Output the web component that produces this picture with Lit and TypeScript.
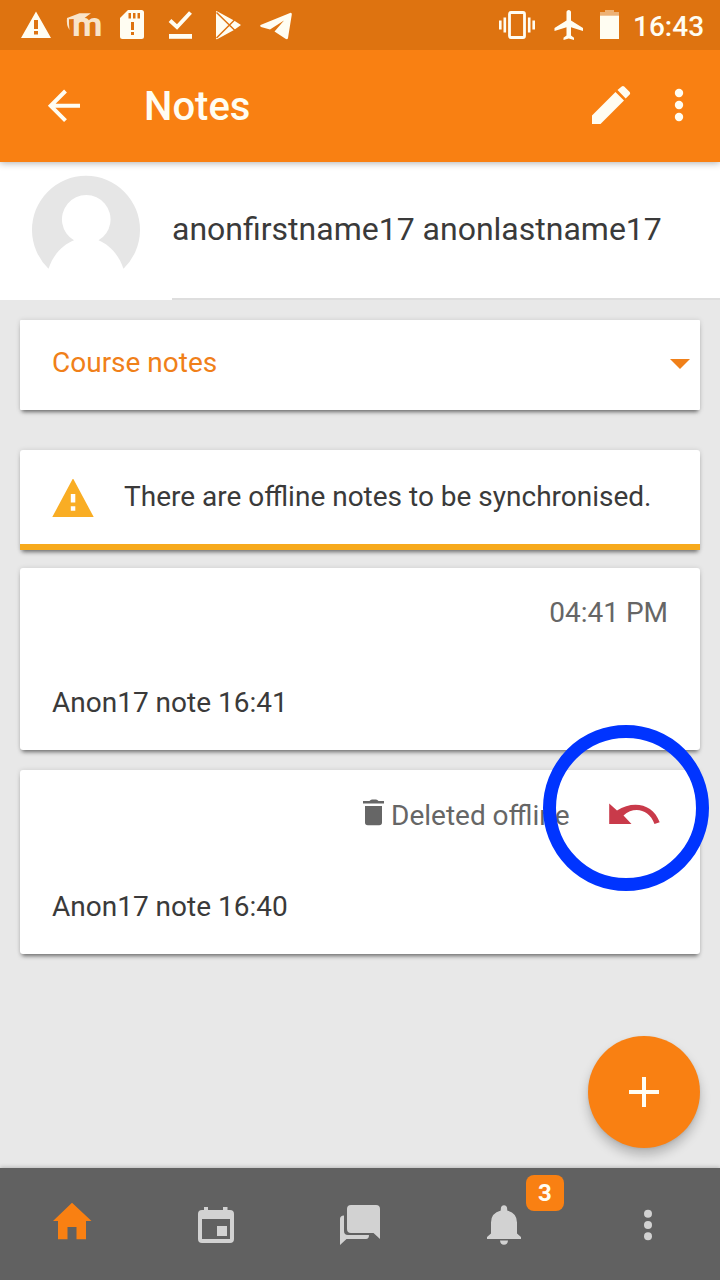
import { LitElement, html, svg, css } from "lit";
import { customElement } from "lit/decorators.js";

// Inline icon; the viewBox keeps one unit equal to one CSS pixel.
const icon = (x: number, y: number, w: number, h: number, body: unknown) =>
  html`<svg width=${w} height=${h} viewBox="${x} ${y} ${w} ${h}" aria-hidden="true">${body}</svg>`;

@customElement("status-bar")
class StatusBar extends LitElement {
  static styles = css`
    :host { display: flex; height: 50px; background: #de7310; color: #fffdf2; position: relative; z-index: 2; }
    svg { display: block; flex: none; }
    .right { margin-left: auto; display: flex; }
    .time { width: 77px; margin-left: 9px; padding-right: 10px; font: 500 28px/54px Roboto, sans-serif; height: 50px; white-space: nowrap; }
    .logo { font: 700 34px Roboto, sans-serif; }
  `;
  render() {
    return html`
      ${icon(0, 0, 60, 50, svg`<path fill="currentColor" fill-rule="evenodd" d="M36 11.5 51 38H21zM34 20v9h4v-9zM34 31v3.5h4V31z"/>`)}
      ${icon(60, 0, 50, 50, svg`<g opacity=".82" fill="currentColor"><text class="logo" x="72" y="36.300" textLength="30.500" lengthAdjust="spacingAndGlyphs">m</text><path d="M67 18 79.500 13.200H91L86.500 16.500 81.500 20.500 74 21.500V19L69 19.300V24L69.500 30Q66 25 67 18z"/></g>`)}
      ${icon(110, 0, 50, 50, svg`<path fill="currentColor" fill-rule="evenodd" d="M128 10h13.500q2.500 0 2.500 2.500v24q0 2.500-2.500 2.500h-19q-2.500 0-2.500-2.500V18zM128.500 13v5.500h2.500V13zM133 13v5.500h2.500V13zM137.500 13v5.500h2.500V13zM131 22v8h3v-8zM131 32v3h3v-3z"/>`)}
      ${icon(160, 0, 45, 50, svg`<path d="m170 20.500 7 6.500 13.500-14.500" fill="none" stroke="currentColor" stroke-width="4"/><path fill="currentColor" d="M169 34h23v4.800h-23z"/>`)}
      ${icon(205, 0, 45, 50, svg`<path fill="currentColor" d="M216 11.500q0-1 1.500 0L234 20.500l7 4.500-7 5-16.500 9q-1.500.8-1.500-.500z"/><path d="m216.500 12.500 19 18.500M216.500 38 235.500 19" stroke="#de7310" stroke-width="1.500"/>`)}
      ${icon(250, 0, 50, 50, svg`<path fill="currentColor" d="M260.500 25 290 13q2-.6 1.800 1.500L288 38q-.500 2-2.500.8L274.500 31.500 284 20.500 270 29.500 261 27q-1.500-1-.500-2z"/>`)}
      <div class="right">
        ${icon(490, 0, 134, 50, svg`<rect x="509.500" y="12.500" width="15" height="25" rx="1.500" fill="none" stroke="currentColor" stroke-width="2.800"/><path d="M504.800 17.500v15M500.300 20.500v9M529.200 17.500v15M533.700 20.500v9" stroke="currentColor" stroke-width="2.600"/>
        <path transform="translate(551.500 7) scale(1.500)" fill="currentColor" d="M21 16v-2l-8-5V3.500c0-.83-.67-1.500-1.500-1.500S10 2.670 10 3.500V9l-8 5v2l8-2.500V19l-2 1.500V22l3.500-1 3.500 1v-1.500L13 19v-5.500z"/>
        <path opacity=".45" fill="currentColor" d="M605 10h9v2h5v3.500h-19V12h5z"/><path fill="currentColor" d="M600 15.500h19V39h-19z"/>`)}
        <span class="time">16:43</span>
      </div>`;
  }
}

@customElement("tab-bar")
class TabBar extends LitElement {
  static styles = css`
    :host { display: grid; grid-template-columns: repeat(5, 1fr); height: 112px; background: #616161; color: #d2d2d2; box-shadow: 0 -1px 4px rgba(0,0,0,.2); position: relative; }
    .tab { position: relative; }
    .home { color: #f98012; }
    svg { display: block; }
    .badge { position: absolute; left: 94px; top: 7px; width: 38px; height: 36px; border-radius: 8px; background: #f98012; color: #fffdf2; text-align: center; font: 700 24px/37px Roboto, sans-serif; }
  `;
  render() {
    return html`
      <div class="tab home">${icon(0, 1168, 144, 112, svg`<path fill="currentColor" d="M72 1202.700 91.500 1221H86v18.300h-9.500V1227h-9v12.300H58V1221h-5z"/>`)}</div>
      <div class="tab">${icon(144, 1168, 144, 112, svg`<path fill="currentColor" fill-rule="evenodd" d="M204 1207h4v3h15v-3h4.500v3h2.500q4 0 4 4v25q0 4-4 4h-28q-4 0-4-4v-25q0-4 4-4h2zM202 1219v20h28v-20zM217 1226h10v10h-10z"/>`)}</div>
      <div class="tab">${icon(288, 1168, 144, 112, svg`<path fill="currentColor" d="M351 1205h25q4 0 4 4v30l-6.500-6H351q-4 0-4-4v-20q0-4 4-4zM344 1215.500V1231q0 4 4 4h21q0 4-3 4h-19.500l-6.500 6v-26q0-3.500 4-3.500z"/>`)}</div>
      <div class="tab">${icon(432, 1168, 144, 112, svg`<path fill="currentColor" d="M504 1205.300q3 0 3.200 3.700v1.500q9.800 2.500 9.800 12v11l4 3.500v2h-34v-2l4-3.500v-11q0-9.500 9.800-12v-1.500q.2-3.700 3.200-3.700zM500 1240.500h8q-.500 4.300-4 4.300t-4-4.300z"/>`)}<span class="badge">3</span></div>
      <div class="tab">${icon(576, 1168, 144, 112, svg`<g fill="currentColor"><circle cx="648" cy="1213.700" r="4"/><circle cx="648" cy="1225" r="4"/><circle cx="648" cy="1236.300" r="4"/></g>`)}</div>`;
  }
}

@customElement("app-root")
class AppRoot extends LitElement {
  static styles = css`
    :host { display: flex; flex-direction: column; width: 720px; height: 1280px; background: #e8e8e8; position: relative; overflow: hidden; font-family: Roboto, sans-serif; color: #3a3a3a; }
    svg { display: block; flex: none; }
    status-bar, tab-bar { flex: none; }
    .header { display: flex; height: 112px; flex: none; background: #f98012; color: #fffdf2; box-shadow: 0 1px 7px rgba(0,0,0,.32); position: relative; z-index: 1; }
    h1 { margin: 0; flex: 1; font: 500 40px/114px Roboto, sans-serif; height: 112px; }
    .user { display: flex; height: 138px; flex: none; background: linear-gradient(#fff, #fff) 0 0 / 172px 138px no-repeat; }
    .name { flex: 1; height: 136px; background: #fff; border-bottom: 2px solid #dedede; font-size: 32px; line-height: 134px; }
    .content { flex: 1; display: flex; flex-direction: column; padding: 20px 20px 0; }
    .card { background: #fff; border-radius: 3px; box-shadow: 0 4px 4px -2px rgba(0,0,0,.5), 0 0 5px rgba(0,0,0,.12); font-size: 28px; line-height: 36px; flex: none; display: flex; box-sizing: border-box; }
    .select { height: 90px; margin-bottom: 40px; padding: 25px 0 0 32px; color: #f08019; justify-content: space-between; border-radius: 1px; }
    .warning { height: 100px; margin-bottom: 18px; border-bottom: 6px solid #f7aa1d; border-radius: 3px 3px 0 0; padding-top: 29px; }
    .note { flex-direction: column; padding: 27px 32px 0; }
    .first { height: 182px; margin-bottom: 20px; }
    .second { height: 184px; }
    .meta { align-self: flex-end; color: #666; display: flex; height: 90px; }
    .second .meta { height: 92px; padding-right: 8px; }
    .state { padding-top: 1px; width: 178px; white-space: nowrap; }
    .fab { position: absolute; left: 588px; top: 1036px; width: 112px; height: 112px; border-radius: 50%; background: #f98012; box-shadow: 0 7px 11px rgba(0,0,0,.22), 0 1px 3px rgba(0,0,0,.08); color: #fffdf2; }
    .ring { position: absolute; left: 543px; top: 725px; width: 166px; height: 166px; box-sizing: border-box; border: 13px solid #0034ff; border-radius: 50%; }
  `;
  render() {
    return html`
      <status-bar></status-bar>
      <header class="header">
        ${icon(0, 50, 144, 112, svg`<path d="M80 105.800H51M65.500 91 50.700 105.800 65.500 120.600" fill="none" stroke="currentColor" stroke-width="4"/>`)}
        <h1>Notes</h1>
        ${icon(576, 50, 144, 112, svg`<path fill="currentColor" d="M592 124v-8.500l23.500-23.500 8.500 8.500L600.500 124zM617.500 90l4.200-3.500q1.200-1 2.500 0l5.500 5.500q1 1.300 0 2.500l-4 4z"/><g fill="currentColor"><circle cx="679" cy="93" r="4.200"/><circle cx="679" cy="105" r="4.200"/><circle cx="679" cy="117" r="4.200"/></g>`)}
      </header>
      <section class="user">
        ${icon(0, 162, 172, 136, svg`<path fill="#e6e6e6" d="M48.500 268.700A54 54 0 1 1 123.500 268.700C118 253 109 245 98.500 240.300A24.300 24.300 0 1 0 74 240.300C63 245 54 253 48.500 268.700z"/>`)}
        <div class="name">anonfirstname17 anonlastname17</div>
      </section>
      <main class="content">
        <div class="card select"><span>Course notes</span>${icon(662, 345, 38, 30, svg`<path fill="#f08019" d="M670 359h20l-10 10z"/>`)}</div>
        <div class="card warning">
          ${icon(20, 479, 104, 42, svg`<path fill="#f9ad24" fill-rule="evenodd" d="M73 478.300 93.700 517H52.300zM70.800 494v8.500h4.500V494zM70.800 506.300v4.500h4.500v-4.500z" />`)}
          <span>There are offline notes to be synchronised.</span>
        </div>
        <article class="card note first"><div class="meta">04:41 PM</div><div>Anon17 note 16:41</div></article>
        <article class="card note second">
          <div class="meta">
            ${icon(360, 797, 31, 36, svg`<path fill="#666" d="M369.500 801q1-1.500 2.500-1.500h4q1.500 0 2.500 1.500h5.500v2.600h-21V801zM365 806h17v16.500q0 2.800-2.800 2.800h-11.400q-2.800 0-2.800-2.800z"/>`)}
            <span class="state">Deleted offline</span>
            ${icon(569, 797, 91, 50, svg`<path fill="#c93a4a" d="M609.200 803.500 617 810.500C633 800 653 803.500 659.700 822.300L654.500 824C649 809 634 806 623.500 815.500L631.500 824H609.200z"/>`)}
          </div>
          <div>Anon17 note 16:40</div>
        </article>
      </main>
      <tab-bar></tab-bar>
      <div class="fab">${icon(588, 1036, 112, 112, svg`<path d="M629 1092h30M644 1077v30" stroke="currentColor" stroke-width="4"/>`)}</div>
      <div class="ring"></div>`;
  }
}
